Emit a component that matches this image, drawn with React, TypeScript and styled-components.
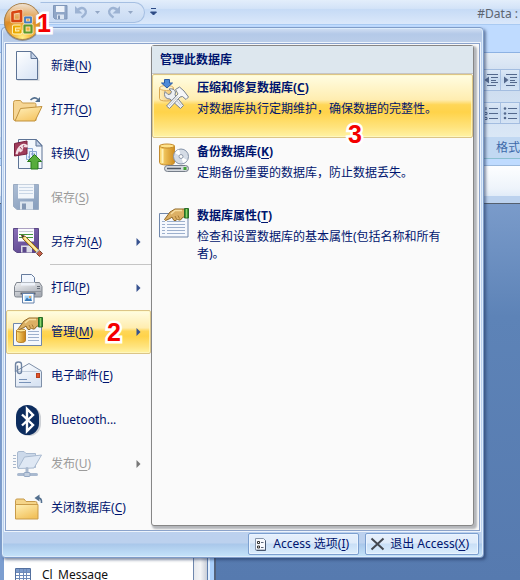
import React from "react";
import styled, { createGlobalStyle, css } from "styled-components";

const GlobalStyle = createGlobalStyle`
  *, *::before, *::after { box-sizing: border-box; }
  body {
    margin: 0;
    background: #587cb0;
    font-family: "Noto Sans", "Noto Sans CJK SC", sans-serif;
    font-size: 12px;
    line-height: 18px;
    color: #00156e;
  }
  button { font: inherit; color: inherit; cursor: default; }
`;

const AppWindow = styled.div`
  position: relative;
  display: flex;
  flex-direction: column;
  min-height: 100vh;
  overflow: hidden;
`;

const TitleBar = styled.header`
  display: flex;
  align-items: center;
  height: 25px;
  padding-left: 40px;
  background: linear-gradient(#e3eefb, #d3e3f8 35%, #c6dbf6 40%, #dbe8fa);
  border-bottom: 1px solid #a9caf2;
`;

const QuickAccess = styled.div`
  display: flex;
  align-items: center;
  gap: 6px;
  height: 21px;
  padding: 0 10px 0 12px;
  border: 1px solid #a5bfe2;
  border-left-color: transparent;
  border-radius: 0 11px 11px 0;
  background: linear-gradient(#dce8f8, #c9dbf3);
`;

const ToolButton = styled.button`
  display: flex;
  padding: 0;
  border: 0;
  background: none;
`;

const MoreButton = styled(ToolButton)`
  margin-left: 5px;
`;

const WindowTitle = styled.h1`
  flex: 1;
  margin: 0;
  padding: 3px 2px 0 0;
  text-align: right;
  font-size: 12px;
  font-weight: 400;
  color: #5c6470;
  white-space: nowrap;
`;

const TabStrip = styled.div`
  height: 28px;
  background: #bfdbff;
  border-bottom: 1px solid #8db2e3;
`;

const Ribbon = styled.div`
  display: flex;
  flex-direction: column;
  align-items: flex-end;
  height: 106px;
  background: linear-gradient(#e4edf7, #d5e2f2 15%, #c8d9ed 16%, #e0ecf9);
  border-bottom: 1px solid #8bbfd0;
`;

const RibbonTools = styled.div`
  display: flex;
  height: 22px;
  margin-top: 16px;
  border: 1px solid #a3bde0;
  border-right: 0;
  background: linear-gradient(#dce8f6, #c6d9ef 50%, #d5e4f5);

  & + & { margin-top: 11px; }
`;

const RibbonTool = styled(ToolButton)`
  align-items: center;
  justify-content: center;
  width: 19px;
  border-right: 1px solid #a9c1e2;
`;

const RibbonCaption = styled.div`
  align-self: stretch;
  display: flex;
  justify-content: flex-end;
  align-items: center;
  height: 21px;
  margin-top: auto;
  background: #c1d8f2;
  color: #3e6aaa;
  white-space: nowrap;
`;

const MessageBar = styled.div`
  height: 39px;
  margin-top: 6px;
  background: linear-gradient(#fdfeff, #eef4fb 60%, #e2ecf8 80%, #bcd2ee 82%);
  border-top: 1px solid #9bb9dd;
  border-bottom: 1px solid #55606e;
  box-shadow: 0 -6px 0 #bfdbff;
`;

const Workspace = styled.div`
  flex: 1;
  display: flex;
  align-items: stretch;
  background: linear-gradient(#7a9bca, #5d83b7 30%, #567aaf);
`;

const NavPane = styled.nav`
  display: flex;
  flex-direction: column;
  justify-content: flex-end;
  width: 194px;
  border-left: 4px solid #7c9ed0;
  border-right: 1px solid #6f87ad;
  background: #fff;
`;

const NavLink = styled.a`
  display: flex;
  align-items: center;
  gap: 11px;
  height: 18px;
  padding: 7px 0 0 11px;
  color: #111;
  text-decoration: none;
  white-space: nowrap;
`;

const ScrollTrack = styled.div`
  width: 14px;
  background: linear-gradient(90deg, #e6e9ee, #f3f4f6 50%, #c9ced8);
  border-right: 1px solid #5f7fae;
`;

const Splitter = styled.div`
  width: 8px;
  background: #a9cffb;
  border-left: 2px solid #e3f0ff;
  border-right: 2px solid #53627c;
`;

/* ---------- application menu ---------- */

const OfficeButton = styled.button`
  position: absolute;
  z-index: 3;
  top: 2px;
  left: 3px;
  padding: 0;
  border: 0;
  border-radius: 50%;
  background: none;
  line-height: 0;
`;

const Menu = styled.section`
  position: absolute;
  z-index: 2;
  top: 27px;
  left: 1px;
  width: min(483px, calc(100% - 8px));
  padding: 0 3px;
  border: 1px solid #7f9cc8;
  border-radius: 4px;
  background: linear-gradient(#d3e0f3, #b4c9e8 6px, #bbcee9 15px, #b9cfee 16px, #bcd1ee calc(100% - 14px), #a9c7ea calc(100% - 13px), #c5e4fa);
  box-shadow: inset 0 0 0 1px #dcecfb, 2px 2px 3px rgba(30, 50, 90, 0.55);
`;

const MenuBody = styled.div`
  display: flex;
  margin-top: 15px;
  border: 1px solid #8ba3cb;
  box-shadow: 0 0 0 1px #edf4fc;
  background: #fafafa;
`;

const Commands = styled.div`
  flex: 0 0 145px;
  min-width: 0;
`;

const highlight = css`
  border-color: #dcc586;
  background: linear-gradient(#fffde2, #ffedb0 40%, #ffd657 48%, #ffd34a 60%, #ffe47f 85%, #fff3a5);
  box-shadow: inset 0 0 0 1px rgba(255, 249, 200, 0.7);
`;

const Command = styled.button<{ $active?: boolean }>`
  display: flex;
  align-items: center;
  width: 100%;
  height: 44px;
  padding: 0 9px 0 5px;
  border: 1px solid transparent;
  border-radius: 2px;
  background: none;
  text-align: left;
  white-space: nowrap;

  &:disabled { color: #9b9b9b; }
  ${(p) => p.$active && highlight}
`;

const CommandIcon = styled.span`
  display: flex;
  width: 32px;
  margin-right: 7px;
`;

const CommandText = styled.span`
  flex: 1;
`;

const Key = styled.span`
  text-decoration: underline;
  text-underline-offset: 2px;
`;

const Divider = styled.hr`
  height: 2px;
  margin: 0 0 0 44px;
  border: 0;
  border-top: 1px solid #c5c5c5;
`;

const Panel = styled.div`
  flex: 1;
  min-width: 0;
  margin: 1px 5px 4px 0;
  border: 1px solid #868686;
  border-radius: 3px;
  background: #fafafa;
  box-shadow: 2px 2px 2px 1px #b4b6ba;
`;

const PanelTitle = styled.h2`
  margin: 0;
  padding: 5px 8px 4px;
  border-bottom: 1px solid #c5c5c5;
  background: #dde7ee;
  font-size: 12px;
  font-weight: 700;
`;

const Action = styled.button<{ $active?: boolean }>`
  display: flex;
  align-items: flex-start;
  gap: 7px;
  width: 100%;
  min-height: 64px;
  padding: 4px 6px 4px 5px;
  border: 1px solid transparent;
  border-radius: 2px;
  background: none;
  text-align: left;
  ${(p) => p.$active && highlight}
`;

const ActionIcon = styled.span`
  display: flex;
  flex: 0 0 32px;
`;

const ActionTitle = styled.strong`
  display: block;
  line-height: 18px;
`;

const ActionNote = styled.span`
  display: block;
  margin-top: 3px;
  line-height: 17px;
`;

const Footer = styled.footer`
  display: flex;
  justify-content: flex-end;
  gap: 6px;
  padding: 2px 1px;
`;

const FooterButton = styled.button`
  display: flex;
  align-items: center;
  gap: 4px;
  height: 22px;
  padding: 0 9px 0 4px;
  border: 1px solid #7c9fcf;
  border-radius: 2px;
  background: linear-gradient(#e6f0fc, #dfebfa 45%, #c9dff6 50%, #dceefd);
  box-shadow: inset 0 0 0 1px #eaf4ff;
  white-space: nowrap;
`;

const Step = styled.span<{ $x: number; $y: number }>`
  position: absolute;
  z-index: 4;
  left: ${(p) => p.$x}px;
  top: ${(p) => p.$y}px;
  font: 700 25px/26px "Liberation Sans", Arial, sans-serif;
  color: #f40000;
  -webkit-text-stroke: 5px #fff;
  paint-order: stroke fill;
  pointer-events: none;
`;

/* ---------- icons ---------- */

const Icon = ({ children, size = 32 }: { children: React.ReactNode; size?: number }) => (
  <svg width={size} height={size} viewBox={`0 0 ${size} ${size}`} fill="none" aria-hidden="true">{children}</svg>
);

const Grad = ({ id, a, b, flat }: { id: string; a: string; b: string; flat?: boolean }) => (
  <linearGradient id={id} x1="0" y1="0" x2={flat ? "1" : "0.6"} y2={flat ? "0" : "1"}>
    <stop offset="0" stopColor={a} />
    <stop offset="1" stopColor={b} />
  </linearGradient>
);

const OfficeOrb = () => (
  <svg width="39" height="40" viewBox="0 0 39 40" aria-hidden="true">
    <defs>
      <radialGradient id="orb" cx="0.5" cy="0.95" r="0.95">
        <stop offset="0" stopColor="#fff08a" />
        <stop offset="0.25" stopColor="#f8bc3c" />
        <stop offset="0.6" stopColor="#dd8c26" />
        <stop offset="1" stopColor="#d7a46a" />
      </radialGradient>
      <linearGradient id="orbShine" x1="0" y1="0" x2="0" y2="1">
        <stop offset="0" stopColor="#f2ece4" stopOpacity="0.85" />
        <stop offset="1" stopColor="#f0b870" stopOpacity="0.2" />
      </linearGradient>
    </defs>
    <circle cx="19.5" cy="20.5" r="18.5" fill="#5d5346" opacity="0.5" />
    <circle cx="19.5" cy="19.5" r="18" fill="url(#orb)" stroke="#a5824f" />
    <path d="M2.5 19a17 17 0 0 1 34 0Q19.500 23 2.500 19z" fill="url(#orbShine)" />
    <g fill="none" strokeLinejoin="round">
      <path d="M9.500 10.500l8.500-1.500v10h-8.500z" stroke="#ffe9d0" strokeWidth="4.400" opacity="0.6" />
      <path d="M9.500 10.500l8.500-1.500v10h-8.500z" stroke="#d84512" strokeWidth="2.600" />
      <path d="M22 15.500h6v5h-6z" stroke="#fff" strokeWidth="3.600" opacity="0.6" />
      <path d="M22 15.500h6v5h-6z" stroke="#3f7cc4" strokeWidth="1.800" />
      <path d="M17.500 24.500h-6.500v6h6.500v-2.500" stroke="#fff8c4" strokeWidth="4" />
      <path d="M17.500 24.500h-6.500v6h6.500v-2.500" stroke="#eaa800" strokeWidth="2.200" />
      <path d="M21.500 23.500h7v7h-7z" stroke="#fff" strokeWidth="4" opacity="0.6" />
      <path d="M21.500 23.500h7v7h-7z" stroke="#5c9a2c" strokeWidth="2.200" />
    </g>
  </svg>
);

const PageIcon = () => (
  <Icon>
    <defs><Grad id="page" a="#ffffff" b="#dce7f6" /></defs>
    <path d="M5.500 3.500h15l7 7.500v20h-22z" fill="#b9bfc8" opacity="0.5" />
    <path d="M4.500 1.500h14.500l6.500 7v21h-21z" fill="url(#page)" stroke="#5d7395" />
    <path d="M19 1.500v7h6.500z" fill="#c5d3e8" stroke="#5d7395" strokeLinejoin="round" />
  </Icon>
);

const OpenIcon = () => (
  <Icon>
    <defs><Grad id="open" a="#fff0bc" b="#f6c767" /></defs>
    <path d="M1.500 8.500q0-2 2-2h5l2 2.500h12q1.500 0 1.500 1.500V26.500H3q-1.500 0-1.500-1.500z" fill="#f6d694" stroke="#c79a4b" />
    <path d="M3 27L8.500 14.500l21.500-2-7 14.500z" fill="url(#open)" stroke="#c1923f" strokeLinejoin="round" />
    <path d="M18.500 6q4-4 7.500-.5" stroke="#54708f" strokeWidth="1.600" />
    <path d="M23 8h5V3z" fill="#54708f" />
  </Icon>
);

const ConvertIcon = () => (
  <Icon>
    <path d="M6.500 1.500h18l5.500 6v23H6.500z" fill="#f3f7fc" stroke="#5d7395" />
    <path d="M24 1.500v6.500h6z" fill="#c5d3e8" stroke="#5d7395" strokeLinejoin="round" />
    <path d="M14.500 10.500h6v11h-6zM17.500 13.500h7v8h-7z" fill="#e5effc" stroke="#8aa8d3" />
    <path d="M16 19h2M19 16h4" stroke="#7797c7" />
    <path d="M2.500 5.500L15 3v13L2.500 18z" fill="#9f3c5a" stroke="#78213f" />
    <path d="M3.500 16q1-6 5-9 3-2 6-.5l2 1.500-2 1.500-3-.5-1 4-2.500 1.500-1-1.500-1.500 3.500z" fill="#f3dfe5" />
    <path d="M8 9l2 2.500M12 7l-1 2" stroke="#a44d69" />
    <path d="M22.500 16.500l7 7h-3.500v7.500h-7v-7.500h-3.500z" fill="#58ad3c" stroke="#297b1b" />
  </Icon>
);

const SaveIcon = () => (
  <Icon>
    <defs><Grad id="save" a="#adbed5" b="#8ba1bf" /></defs>
    <path d="M1.500 2.500h25v25H5l-3.500-3z" fill="url(#save)" stroke="#9aabc2" />
    <path d="M6 2.500h16v14H6z" fill="#f2f6fb" />
    <path d="M7 5.500h14M7 8.500h14M7 11.500h14" stroke="#c9d6e6" />
    <path d="M8 19.500h13v8H8z" fill="#dce4ee" />
    <path d="M10 21.500h4v6h-4z" fill="#8397b4" />
  </Icon>
);

const SaveAsIcon = () => (
  <Icon>
    <defs><Grad id="saveas" a="#8a70b8" b="#5d468f" /></defs>
    <path d="M1.500 2.500h25v24H5l-3.500-2.500z" fill="url(#saveas)" stroke="#5a4785" />
    <path d="M6 2.500h16v13H6z" fill="#fbfbfd" />
    <path d="M7 5.500h14" stroke="#c9ccd5" />
    <path d="M7 8.500h14M7 11.500h14" stroke="#41963b" />
    <path d="M9 19.500h11v7H9z" fill="#dcdce6" />
    <path d="M10.500 21h4v5.500h-4z" fill="#5b478b" />
    <path d="M9.500 9l4 1.500L28 25l-2.500 2.500L11 13z" fill="#f0ca68" stroke="#8c6420" strokeLinejoin="round" />
    <path d="M12.500 11.500l13.500 14" stroke="#fff0ae" strokeWidth="1.400" />
    <path d="M9.500 9l1 3 2-2z" fill="#343434" />
    <path d="M24.500 27.500l3-3 3 3-3 3z" fill="#c5614d" stroke="#76452f" strokeLinejoin="round" />
    <path d="M24 27l3.500-3.500" stroke="#b9bcc4" strokeWidth="1.500" />
  </Icon>
);

const PrintIcon = () => (
  <Icon>
    <defs><Grad id="print" a="#f3f4f6" b="#a6abb3" /></defs>
    <path d="M9.500 13V2.500h10l3 3V13z" fill="#f2f7fe" stroke="#657b9d" />
    <path d="M4.500 10.500h23l2.500 4v9q0 1.500-1.500 1.500h-24Q2.500 25 2.500 23.500v-9z" fill="url(#print)" stroke="#7f858e" />
    <path d="M9 10.500h14v3H9z" fill="#eef3fa" />
    <path d="M3 19.500h26" stroke="#8d939c" />
    <path d="M8.500 20.500h15v2h-15z" fill="#555b66" />
    <path d="M10.500 21.500h11.500v9.500h-11.500z" fill="#fff" stroke="#6280a9" />
    <path d="M12.500 23.500h7.500v5.500h-7.500z" fill="#a9d4f6" />
    <path d="M12.500 29l2.500-3.500 2 2 1.500-1.500 1.500 3z" fill="#3778b8" />
    <circle cx="18" cy="25" r="1" fill="#f19a37" />
    <path d="M25 14.500h3M25 16.500h3" stroke="#666d77" />
  </Icon>
);

const pointingHand = (
  <g strokeLinejoin="round">
    <path d="M6.500 12.500L12 5l5-3h9.500v7.500L24 11l-1.500 2h-2l-1-1-1.500 1.500h-2L15 12l-1-2-2 1.500-4.500 2z" fill="#dcb064" stroke="#8f6727" />
    <path d="M13 7l4-3.500h7" stroke="#f6dda0" strokeWidth="1.500" />
    <path d="M17 9l1.500 3M20 8.500l1.500 3" stroke="#a87a35" />
    <path d="M26.500 1.500h4v9.500h-4z" fill="#44983b" stroke="#286d27" />
    <path d="M28.500 2v8.500" stroke="#8ed26b" />
  </g>
);

const ManageIcon = () => (
  <Icon>
    <defs><Grad id="can1" a="#ffe07a" b="#c77f16" flat /></defs>
    <path d="M1.500 7.500h28v22h-28z" fill="#f5f8fd" stroke="#7087ab" />
    <path d="M16 15.500h11M16 18.500h11M16 21.500h11M16 24.500h11" stroke="#9db0cd" />
    <path d="M4.500 14.500v10q0 2 4.500 2t4.500-2v-10z" fill="url(#can1)" stroke="#b87f26" />
    <ellipse cx="9" cy="14.500" rx="4.500" ry="1.500" fill="#ffe89a" stroke="#b47b22" />
    {pointingHand}
  </Icon>
);

const MailIcon = () => (
  <Icon>
    <defs><Grad id="mail" a="#ffffff" b="#d9e4f3" /></defs>
    <path d="M3.500 11.500L17 3.500l12.500 7.500v16h-26z" fill="url(#mail)" stroke="#7e8fa8" />
    <path d="M3.500 11.500h26" stroke="#c3cedd" />
    <path d="M7 19.500h8M7 22.500h12" stroke="#7892b8" />
    <rect x="24.500" y="13.500" width="3" height="4" fill="#e2522b" stroke="#b8401d" />
    <path d="M5.500 5.500v6q0 2 2 2t2-2V4.500q0-2.500-3-2.500T3.500 4.500V12" stroke="#6f84a3" strokeWidth="1.400" />
  </Icon>
);

const BluetoothIcon = () => (
  <Icon>
    <rect x="5" y="2" width="24" height="30" rx="12" fill="#9ea4ae" opacity="0.5" />
    <rect x="4" y="1" width="23" height="30" rx="11.500" fill="#0c2c5e" />
    <path d="M10 10.500l11 10.500-6 6V5l6 6-11 10.500" stroke="#fff" strokeWidth="2.400" />
  </Icon>
);

const PublishIcon = () => (
  <Icon>
    <path d="M1 7.500h3M1 10.500h3M1 13.500h3M1 16.500h3M1 19.500h3" stroke="#a9b8cd" />
    <path d="M5.500 19.500V5q0-1.500 1.500-1.500h5l2 2h9.500v14z" fill="#ccd9ea" stroke="#a9bad0" />
    <path d="M6 20.500L12.500 9l17-2L22 20z" fill="#dfe8f4" stroke="#a9bad0" strokeLinejoin="round" />
    <path d="M15 20.500v4M6.500 26.500h18" stroke="#a9b9cf" strokeWidth="3" strokeLinecap="round" />
    <rect x="12" y="24.500" width="6" height="4" rx="1" fill="#c3cfdf" stroke="#93a7c3" />
  </Icon>
);

const CloseDbIcon = () => (
  <Icon>
    <defs><Grad id="closedb" a="#fff0b8" b="#f2c25c" /></defs>
    <path d="M3.500 11V8.500Q3.500 7 5 7h7l2 2.500h9.500q1.500 0 1.500 1.500v15.500h-20q-1.500 0-1.500-1.500z" fill="#f5d488" stroke="#c79a4b" />
    <path d="M3.500 12.500H26v14.500H3.500z" fill="url(#closedb)" stroke="#c99b48" />
    <path d="M25 5.500q5 0 4.500 5.500" stroke="#54708f" strokeWidth="1.600" />
    <path d="M22.500 6l5-3.500v7z" fill="#54708f" />
  </Icon>
);

const RepairIcon = () => (
  <Icon>
    <defs><Grad id="can2" a="#fff0bb" b="#efbf68" flat /></defs>
    <path d="M1.500 9v10.500q0 2.500 7 2.500t7-2.500V9z" fill="url(#can2)" stroke="#d9a750" />
    <ellipse cx="8.500" cy="9" rx="7" ry="2.500" fill="#fff3c9" stroke="#dfb265" />
    <path d="M6.500.500h5v3.500h3l-5.500 5-5.500-5h3z" fill="#4e8bd8" stroke="#2a5da6" strokeLinejoin="round" />
    <g strokeLinejoin="round" stroke="#7b838e">
      <path d="M7 12.500l3 3 2.500-.5 1-2.500-2.500-2.500q5-1 6.500 3l-.5 3 8.500 10.500-3 3-10.500-9.500q-5 0-5.500-4.500z" fill="#eceff3" />
      <path d="M17.500 10.500L21.500 8l4.500 4 4.500 6-2.500 2.500-3.500-3-2.500.5-10.500 11.500-3-2.500L20 15z" fill="#f6f7f8" />
    </g>
    <path d="M11 27l9-9.500M17 19.500l6 7" stroke="#c3c9d2" />
  </Icon>
);

const BackupIcon = () => (
  <Icon>
    <defs><Grad id="can3" a="#ffdd77" b="#cf8c20" flat /></defs>
    <path d="M1.500 3v16.500q0 2.500 7.500 2.500t7.500-2.500V3z" fill="url(#can3)" stroke="#c28a30" />
    <path d="M4.500 6v14" stroke="#fff0b5" strokeWidth="2" />
    <ellipse cx="9" cy="3" rx="7.500" ry="2" fill="#ffe38b" stroke="#c58a2a" />
    <circle cx="23" cy="13.500" r="7.500" fill="#d5dce6" stroke="#8593a8" />
    <path d="M23 13.500l-6-3.500a7 7 0 0 1 4-3.500zM23 13.500l6 3.500a7 7 0 0 1-4 3z" fill="#fff" />
    <circle cx="23" cy="13.500" r="2" fill="#fafafa" stroke="#8f9bad" />
    <rect x="6.500" y="22.500" width="24" height="6" rx="3" fill="#d5d9df" stroke="#757d89" />
    <path d="M9 25.500h14" stroke="#4f5763" strokeWidth="1.500" />
    <rect x="25.500" y="24" width="3" height="3" fill="#3fa333" />
  </Icon>
);

const PropertiesIcon = () => (
  <Icon>
    <path d="M1.500 6.500H30v23.500H1.500z" fill="#f5f8fd" stroke="#7087ab" />
    <path d="M4 14.500h3M9 14.500h18M4 17.500h3M9 17.500h18M4 20.500h3M9 20.500h18M4 23.500h3M9 23.500h18M4 26.500h3M9 26.500h18" stroke="#9db0cd" />
    {pointingHand}
  </Icon>
);

const OptionsIcon = () => (
  <Icon size={16}>
    <path d="M2.500 2.500h8l2 2v9.500h-10z" fill="#f8fafd" stroke="#8494ab" />
    <path d="M12.500 4.500v10h-9" stroke="#47566e" />
    <path d="M4.500 5.500h2v2h-2zM4.500 10h2v2h-2z" fill="#fff" stroke="#333" />
    <path d="M8 6.500h2.500M8 11.500h2.500" stroke="#5c6779" />
  </Icon>
);

const ExitIcon = () => (
  <Icon size={16}>
    <path d="M1.500 2.500l12 11M13.500 2.500l-12 11" stroke="#43474f" strokeWidth="2" />
  </Icon>
);

const SmallSave = () => (
  <svg width="15" height="15" viewBox="0 0 15 15" aria-hidden="true">
    <path d="M.500.500h13.500v13.500H2L.500 12.500z" fill="#8fa6c7" stroke="#8097b9" />
    <path d="M3 1h8.500v6H3z" fill="#eef3fa" />
    <path d="M4 9.500h7V14H4z" fill="#dbe5f2" />
    <path d="M5 10.500h2V14H5z" fill="#7d94b5" />
  </svg>
);

const Undo = ({ flip }: { flip?: boolean }) => (
  <svg width="14" height="14" viewBox="0 0 14 14" aria-hidden="true">
    <g transform={flip ? "matrix(-1 0 0 1 14 0)" : undefined}>
      <path d="M3 5.500q5-4.500 8-1t-3.500 8" fill="none" stroke="#9db3d3" strokeWidth="2.400" />
      <path d="M1 1v7.500h7.500z" fill="#9db3d3" />
    </g>
  </svg>
);

const Caret = () => (
  <svg width="7" height="5" viewBox="0 0 7 5" aria-hidden="true"><path d="M1 1h5L3.500 4z" fill="#93a7c5" /></svg>
);

const More = () => (
  <svg width="7" height="8" viewBox="0 0 7 8" aria-hidden="true">
    <path d="M1 .500h5M.500 4h6l-3 3z" stroke="#2c4a85" fill="#2c4a85" />
  </svg>
);

const SubArrow = ({ muted }: { muted?: boolean }) => (
  <svg width="5" height="8" viewBox="0 0 5 8" aria-hidden="true">
    <path d="M.500 0l4 4-4 4z" fill={muted ? "#777" : "#37528f"} />
  </svg>
);

const TextLines = ({ kind }: { kind: "out" | "in" | "num" | "dot" }) => (
  <svg width="15" height="14" viewBox="0 0 15 14" aria-hidden="true" stroke="#53688c" fill="#53688c">
    {kind === "out" || kind === "in" ? (
      <>
        <path d="M3 1.500h11M7 4.500h7M7 7.500h5M7 9.500h7M3 12.500h9" />
        <path d={kind === "out" ? "M5 3.500L.500 7 5 10.500z" : "M1 3.500L5.500 7 1 10.500z"} stroke="none" />
      </>
    ) : (
      <>
        <path d="M5 2.500h9M5 7.500h9M5 12.500h9" />
        {kind === "dot" ? (
          <g stroke="none"><circle cx="2" cy="2.500" r="1.300" /><circle cx="2" cy="7.500" r="1.300" /><circle cx="2" cy="12" r="1.300" /></g>
        ) : (
          <path d="M2 1v3M1 6.500h2v2H1M1 11.500h2v2H1" fill="none" />
        )}
      </>
    )}
  </svg>
);

const GridIcon = () => (
  <Icon size={16}>
    <path d="M.500 1.500h15v13H.500z" fill="#fff" stroke="#53709f" />
    <path d="M1 2h14v3H1z" fill="#7c9bcb" />
    <path d="M1 5.500h14M1 8.500h14M1 11.500h14M4.500 2v12M8.500 2v12M11.500 2v12" stroke="#6e8ab8" />
  </Icon>
);

/* ---------- content ---------- */

type CommandSpec = {
  label: string;
  hotkey?: string;
  icon: React.ReactNode;
  submenu?: boolean;
  disabled?: boolean;
  active?: boolean;
};

const fileCommands: CommandSpec[] = [
  { label: "新建", hotkey: "N", icon: <PageIcon /> },
  { label: "打开", hotkey: "O", icon: <OpenIcon /> },
  { label: "转换", hotkey: "V", icon: <ConvertIcon /> },
  { label: "保存", hotkey: "S", icon: <SaveIcon />, disabled: true },
  { label: "另存为", hotkey: "A", icon: <SaveAsIcon />, submenu: true },
];

const shareCommands: CommandSpec[] = [
  { label: "打印", hotkey: "P", icon: <PrintIcon />, submenu: true },
  { label: "管理", hotkey: "M", icon: <ManageIcon />, submenu: true, active: true },
  { label: "电子邮件", hotkey: "E", icon: <MailIcon /> },
  { label: "Bluetooth...", icon: <BluetoothIcon /> },
  { label: "发布", hotkey: "U", icon: <PublishIcon />, submenu: true, disabled: true },
  { label: "关闭数据库", hotkey: "C", icon: <CloseDbIcon /> },
];

const actions = [
  { title: "压缩和修复数据库", hotkey: "C", note: "对数据库执行定期维护，确保数据的完整性。", icon: <RepairIcon />, active: true },
  { title: "备份数据库", hotkey: "K", note: "定期备份重要的数据库，防止数据丢失。", icon: <BackupIcon /> },
  { title: "数据库属性", hotkey: "T", note: "检查和设置数据库的基本属性(包括名称和所有者)。", icon: <PropertiesIcon /> },
];

const Label = ({ text, hotkey }: { text: string; hotkey?: string }) => (
  <>{text}{hotkey && <>(<Key>{hotkey}</Key>)</>}</>
);

const CommandList = ({ items }: { items: CommandSpec[] }) => (
  <>
    {items.map((c) => (
      <Command key={c.label} $active={c.active} disabled={c.disabled}>
        <CommandIcon>{c.icon}</CommandIcon>
        <CommandText><Label text={c.label} hotkey={c.hotkey} /></CommandText>
        {c.submenu && <SubArrow muted={c.disabled} />}
      </Command>
    ))}
  </>
);

export default function App() {
  return (
    <>
      <GlobalStyle />
      <AppWindow>
        <TitleBar>
          <QuickAccess>
            <ToolButton aria-label="保存"><SmallSave /></ToolButton>
            <ToolButton aria-label="撤消"><Undo /></ToolButton>
            <ToolButton aria-label="撤消列表"><Caret /></ToolButton>
            <ToolButton aria-label="恢复"><Undo flip /></ToolButton>
            <ToolButton aria-label="恢复列表"><Caret /></ToolButton>
          </QuickAccess>
          <MoreButton aria-label="自定义快速访问工具栏"><More /></MoreButton>
          <WindowTitle>#Data :</WindowTitle>
        </TitleBar>
        <TabStrip />
        <Ribbon>
          <RibbonTools>
            <RibbonTool aria-label="减少缩进"><TextLines kind="out" /></RibbonTool>
            <RibbonTool aria-label="增加缩进"><TextLines kind="in" /></RibbonTool>
          </RibbonTools>
          <RibbonTools>
            <RibbonTool aria-label="编号"><TextLines kind="num" /></RibbonTool>
            <RibbonTool aria-label="项目符号"><TextLines kind="dot" /></RibbonTool>
          </RibbonTools>
          <RibbonCaption>格式</RibbonCaption>
        </Ribbon>
        <MessageBar />
        <Workspace>
          <NavPane>
            <NavLink href="#cl-message"><GridIcon />Cl_Message</NavLink>
          </NavPane>
          <ScrollTrack />
          <Splitter />
        </Workspace>

        <OfficeButton aria-label="Office"><OfficeOrb /></OfficeButton>
        <Menu>
          <MenuBody>
            <Commands>
              <CommandList items={fileCommands} />
              <Divider />
              <CommandList items={shareCommands} />
            </Commands>
            <Panel>
              <PanelTitle>管理此数据库</PanelTitle>
              {actions.map((a) => (
                <Action key={a.title} $active={a.active}>
                  <ActionIcon>{a.icon}</ActionIcon>
                  <span>
                    <ActionTitle><Label text={a.title} hotkey={a.hotkey} /></ActionTitle>
                    <ActionNote>{a.note}</ActionNote>
                  </span>
                </Action>
              ))}
            </Panel>
          </MenuBody>
          <Footer>
            <FooterButton><OptionsIcon /><span>Access <Label text="选项" hotkey="I" /></span></FooterButton>
            <FooterButton><ExitIcon /><span><Label text="退出 Access" hotkey="X" /></span></FooterButton>
          </Footer>
        </Menu>

        <Step $x={37} $y={10}>1</Step>
        <Step $x={107} $y={319}>2</Step>
        <Step $x={348} $y={121}>3</Step>
      </AppWindow>
    </>
  );
}
